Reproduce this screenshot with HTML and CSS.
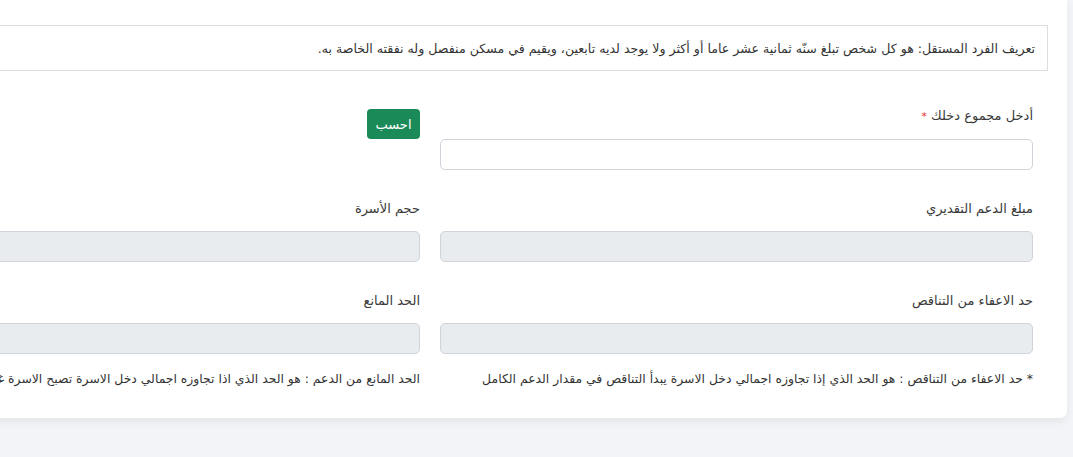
FILE: index.html
```html
<!DOCTYPE html>
<html lang="ar" dir="rtl">
<head>
    <meta charset="UTF-8">
    <meta name="viewport" content="width=device-width, initial-scale=1.0">
    <title>حاسبة الدعم</title>
    <link rel="stylesheet" href="styles.css">
</head>
<body>
    <div class="card">
        <div class="info-box">
            تعريف الفرد المستقل: هو كل شخص تبلغ سنّه ثمانية عشر عاما أو أكثر ولا يوجد لديه تابعين، ويقيم في مسكن منفصل وله نفقته الخاصة به.
        </div>

        <form class="form-grid" id="calcForm">
            <div class="field">
                <label for="income">أدخل مجموع دخلك <span class="req">*</span></label>
                <input type="text" id="income" class="form-input">
            </div>
            <div class="field">
                <button type="button" class="btn-calc">احسب</button>
            </div>

            <div class="field">
                <label for="support">مبلغ الدعم التقديري</label>
                <input type="text" id="support" class="form-input" disabled>
            </div>
            <div class="field">
                <label for="family">حجم الأسرة</label>
                <input type="text" id="family" class="form-input" disabled>
            </div>

            <div class="field last">
                <label for="exempt">حد الاعفاء من التناقص</label>
                <input type="text" id="exempt" class="form-input" disabled>
                <p class="note">* حد الاعفاء من التناقص : هو الحد الذي إذا تجاوزه اجمالي دخل الاسرة يبدأ التناقص في مقدار الدعم الكامل</p>
            </div>
            <div class="field last">
                <label for="limit">الحد المانع</label>
                <input type="text" id="limit" class="form-input" disabled>
                <p class="note">الحد المانع من الدعم : هو الحد الذي اذا تجاوزه اجمالي دخل الاسرة تصبح الاسرة غير مستحقة للدعم</p>
            </div>
        </form>
    </div>
</body>
</html>
```

FILE: styles.css
```css
body {
    font-family: "DejaVu Sans", "Noto Sans", sans-serif;
    margin: 0;
    padding: 0;
    background-color: #f3f4f8;
    overflow: hidden;
    height: 457px;
}
.card {
    width: 1300px;
    margin-right: 6px;
    padding: 25px 19px 31px;
    background: white;
    border-bottom-right-radius: 7px;
    box-shadow: 0 4px 10px rgba(0, 0, 0, 0.06);
    box-sizing: border-box;
}
.info-box {
    border: 1px solid #dedede;
    padding: 0 12px;
    height: 46px;
    box-sizing: border-box;
    display: flex;
    align-items: center;
    font-size: 12.6px;
    color: #333;
    white-space: nowrap;
}
.form-grid {
    display: grid;
    grid-template-columns: 593px 593px;
    column-gap: 20px;
    padding: 0 15px;
    margin-top: 35px;
}
.field {
    margin-bottom: 29px;
}
.field.last {
    margin-bottom: 0;
}
label {
    display: block;
    font-size: 13px;
    color: #3a3a3a;
    line-height: 20px;
    margin-bottom: 12px;
}
.req {
    color: #e3342f;
    font-size: 11px;
}
.form-input {
    display: block;
    width: 100%;
    height: 31px;
    box-sizing: border-box;
    border: 1px solid #ced4da;
    border-radius: 5px;
    background: white;
    font-family: inherit;
    padding: 4px 10px;
}
.form-input:disabled {
    background-color: #e9ecef;
}
.btn-calc {
    margin-top: 3px;
    background-color: #1b8a59;
    color: white;
    border: none;
    border-radius: 4px;
    height: 30px;
    width: 53px;
    font-family: inherit;
    font-size: 13px;
    cursor: pointer;
}
.note {
    margin: 17px 0 0;
    font-size: 12.4px;
    line-height: 16px;
    color: #333;
    white-space: nowrap;
}
```
